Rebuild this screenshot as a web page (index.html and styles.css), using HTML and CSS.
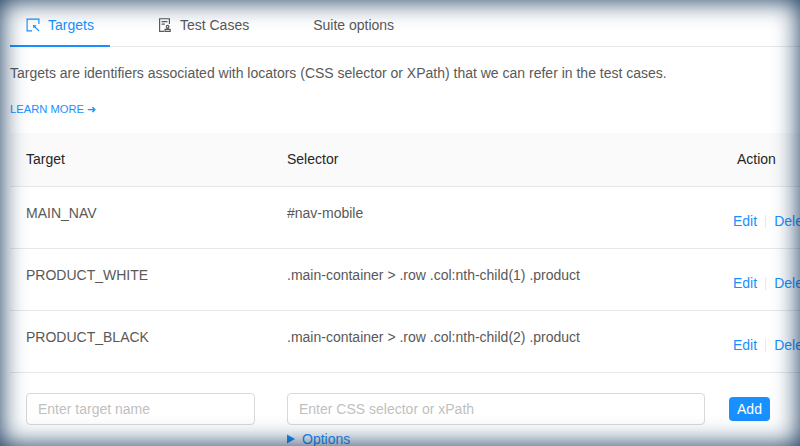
FILE: index.html
```
<!DOCTYPE html>
<html lang="en">
<head>
<meta charset="utf-8">
<title>Targets</title>
<link rel="stylesheet" href="styles.css">
</head>
<body>
<main class="page">
  <nav class="tabs">
    <a class="tab tab-active">
      <svg class="icon" viewBox="0 0 14 14" fill="none" stroke="currentColor" stroke-width="1.15"><path d="M6 12.9H1.1V1.1H12.9V6M7.9 7.9L13 13"/><path d="M7 7L10.6 7.5L7.5 10.6Z" fill="currentColor" stroke="none"/></svg>
      <span>Targets</span>
    </a>
    <a class="tab">
      <svg class="icon" viewBox="0 0 14 14" fill="none" stroke="currentColor" stroke-width="1.15"><path d="M6 13.3H1.6V.7H11.4V6M3.6 3.6H9.4M3.6 6.1H6.8M7 13.3V11.4H12.2V13.3ZM9.1 11.2V10M10.1 11.2V10"/><circle cx="9.6" cy="8.7" r="1.3"/></svg>
      <span>Test Cases</span>
    </a>
    <a class="tab">Suite options</a>
  </nav>
  <p class="intro">Targets are identifiers associated with locators (CSS selector or XPath) that we can refer in the test cases.</p>
  <a class="learn">LEARN MORE ➜</a>
  <section class="table">
    <div class="row head"><div>Target</div><div>Selector</div><div class="head-action">Action</div></div>
    <div class="row"><div>MAIN_NAV</div><div>#nav-mobile</div><div class="actions"><a>Edit</a><i></i><a>Delete</a></div></div>
    <div class="row"><div>PRODUCT_WHITE</div><div>.main-container &gt; .row .col:nth-child(1) .product</div><div class="actions"><a>Edit</a><i></i><a>Delete</a></div></div>
    <div class="row"><div>PRODUCT_BLACK</div><div>.main-container &gt; .row .col:nth-child(2) .product</div><div class="actions"><a>Edit</a><i></i><a>Delete</a></div></div>
    <div class="row form">
      <div><input class="input" placeholder="Enter target name"></div>
      <div><input class="input" placeholder="Enter CSS selector or xPath">
        <a class="options"><svg class="caret" viewBox="0 0 8 10"><path d="M0 .5L8 5L0 9.5Z" fill="currentColor"/></svg>Options</a></div>
      <div class="form-action"><button class="add">Add</button></div>
    </div>
  </section>
</main>
</body>
</html>
```
FILE: styles.css
```
* { box-sizing: border-box; }
body {
  margin: 0;
  background: #fff;
  color: #595959;
  font: 14px/22px "Liberation Sans", Arial, sans-serif;
}
.page {
  position: relative;
  height: 446px;
  padding-left: 10px;
  overflow: hidden;
}
/* Vignette over the whole window */
.page::after {
  content: "";
  position: absolute;
  inset: 0;
  box-shadow: inset 0 0 26px #0b2f55;
  pointer-events: none;
}
.tabs {
  display: flex;
  gap: 32px;
  height: 47px;
  border-bottom: 1px solid #e8e8e8;
}
.tab {
  display: flex;
  height: 47px;
  padding: 14px 16px 0;
}
.tab-active {
  color: #1890ff;
  border-bottom: 2px solid #1890ff;
}
.icon {
  width: 14px;
  height: 14px;
  margin: 4px 8px 0 0;
}
.intro { margin: 15px 0 14px; white-space: nowrap; }
.learn {
  display: block;
  height: 35px;
  font-size: 11.2px;
  color: #1890ff;
}
a { color: inherit; }
.row {
  display: grid;
  grid-template-columns: 261px 450px 140px;
  height: 62px;
  border-bottom: 1px solid #e8e8e8;
}
.row > div { padding: 15px 16px 0; white-space: nowrap; }
.head {
  height: 54px;
  background: #fafafa;
  color: #262626;
}
.row > .head-action { padding-left: 16px; }
.row > .actions {
  display: flex;
  align-items: center;
  height: 22px;
  margin-top: 23px;
  padding: 0 0 0 12px;
  color: #1890ff;
}
.actions i {
  width: 1px;
  height: 13px;
  margin: 0 8px;
  background: #e8e8e8;
}
.row.form { height: 90px; border: 0; }
.row.form > div { padding-top: 20px; }
.input {
  display: block;
  width: 100%;
  height: 32px;
  padding: 4px 11px;
  border: 1px solid #d9d9d9;
  border-radius: 4px;
  background: #fff;
  font: inherit;
}
.input::placeholder { color: #bfbfbf; }
.options {
  display: flex;
  align-items: center;
  margin-top: 3px;
  color: #1890ff;
}
.caret { width: 8px; height: 10px; margin-right: 7px; }
.row.form > .form-action { padding: 24px 0 0 8px; }
.add {
  display: block;
  width: 41px;
  height: 24px;
  padding: 0;
  border: 0;
  border-radius: 4px;
  background: #1890ff;
  color: #fff;
  font: inherit;
}
```
